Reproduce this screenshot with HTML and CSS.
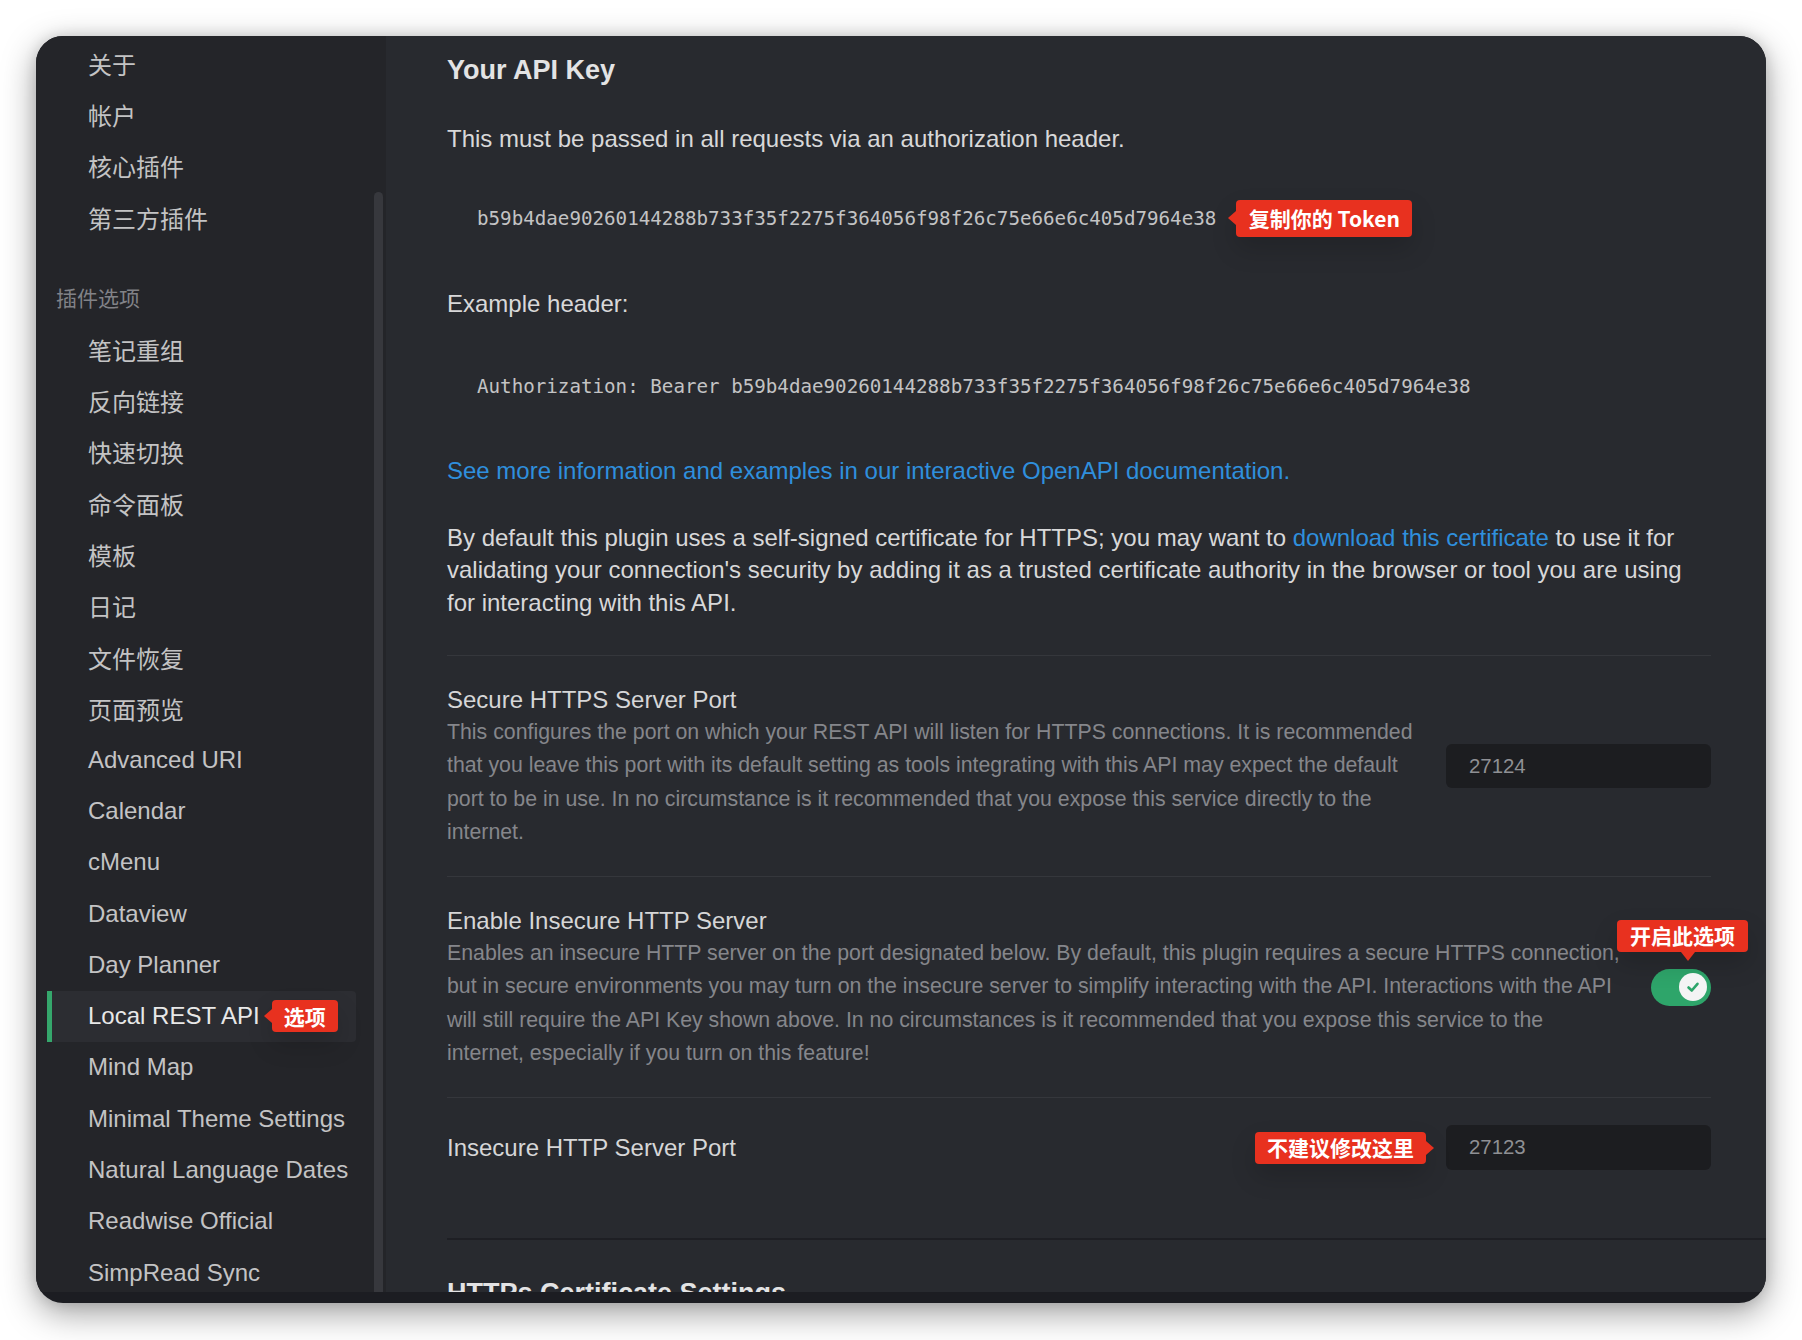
FILE: index.html
```html
<!DOCTYPE html>
<html lang="zh">
<head>
<meta charset="utf-8">
<title>Local REST API</title>
<link rel="stylesheet" href="styles.css">
</head>
<body>
<div class="window">
  <div class="frame">
    <aside class="sidebar">
      <nav class="nav">
        <div class="nav-item">关于</div>
        <div class="nav-item">帐户</div>
        <div class="nav-item">核心插件</div>
        <div class="nav-item">第三方插件</div>
        <div class="nav-heading">插件选项</div>
        <div class="nav-item">笔记重组</div>
        <div class="nav-item">反向链接</div>
        <div class="nav-item">快速切换</div>
        <div class="nav-item">命令面板</div>
        <div class="nav-item">模板</div>
        <div class="nav-item">日记</div>
        <div class="nav-item">文件恢复</div>
        <div class="nav-item">页面预览</div>
        <div class="nav-item">Advanced URI</div>
        <div class="nav-item">Calendar</div>
        <div class="nav-item">cMenu</div>
        <div class="nav-item">Dataview</div>
        <div class="nav-item">Day Planner</div>
        <div class="nav-item active"><span>Local REST API</span><span class="tag tag-left nav-tag">选项</span></div>
        <div class="nav-item">Mind Map</div>
        <div class="nav-item">Minimal Theme Settings</div>
        <div class="nav-item">Natural Language Dates</div>
        <div class="nav-item">Readwise Official</div>
        <div class="nav-item">SimpRead Sync</div>
      </nav>
      <div class="scroll-thumb"></div>
    </aside>

    <main class="content">
      <h2 class="section-title">Your API Key</h2>
      <p class="text intro">This must be passed in all requests via an authorization header.</p>
      <div class="code-row token-row">
        <code class="code">b59b4dae90260144288b733f35f2275f364056f98f26c75e66e6c405d7964e38</code>
        <span class="tag tag-left tag-tall">复制你的 Token</span>
      </div>
      <p class="text label">Example header:</p>
      <div class="code-row header-row">
        <code class="code">Authorization: Bearer b59b4dae90260144288b733f35f2275f364056f98f26c75e66e6c405d7964e38</code>
      </div>
      <p class="text link-line"><a class="link">See more information and examples in our interactive OpenAPI documentation.</a></p>
      <p class="text para">By default this plugin uses a self-signed certificate for HTTPS; you may want to <a class="link">download this certificate</a> to use it for validating your connection's security by adding it as a trusted certificate authority in the browser or tool you are using for interacting with this API.</p>

      <div class="setting first">
        <div class="setting-info">
          <div class="setting-name">Secure HTTPS Server Port</div>
          <div class="setting-desc">This configures the port on which your REST API will listen for HTTPS connections. It is recommended that you leave this port with its default setting as tools integrating with this API may expect the default port to be in use. In no circumstance is it recommended that you expose this service directly to the internet.</div>
        </div>
        <div class="setting-control">
          <div class="port">27124</div>
        </div>
      </div>

      <div class="setting">
        <div class="setting-info">
          <div class="setting-name">Enable Insecure HTTP Server</div>
          <div class="setting-desc">Enables an insecure HTTP server on the port designated below. By default, this plugin requires a secure HTTPS connection, but in secure environments you may turn on the insecure server to simplify interacting with the API. Interactions with the API will still require the API Key shown above. In no circumstances is it recommended that you expose this service to the internet, especially if you turn on this feature!</div>
        </div>
        <div class="setting-control">
          <div class="toggle">
            <span class="tag tag-down toggle-tag">开启此选项</span>
            <span class="knob">
              <svg width="16" height="16" viewBox="0 0 16 16"><polyline points="3.5,8.5 6.8,11.5 12.5,4.8" fill="none" stroke="#2ea56a" stroke-width="2.6" stroke-linecap="round" stroke-linejoin="round"/></svg>
            </span>
          </div>
        </div>
      </div>

      <div class="setting">
        <div class="setting-info">
          <div class="setting-name">Insecure HTTP Server Port</div>
        </div>
        <div class="setting-control port-control">
          <span class="tag tag-right">不建议修改这里</span>
          <div class="port tall">27123</div>
        </div>
      </div>

      <div class="setting-heading">HTTPs Certificate Settings</div>
    </main>
  </div>
</div>
</body>
</html>
```

FILE: styles.css
```css
html, body {
  margin: 0;
  padding: 0;
  background: #ffffff;
}

body {
  width: 1802px;
  height: 1340px;
  overflow: hidden;
  font-family: "Liberation Sans", Arial, "Noto Sans CJK SC", sans-serif;
}

.window {
  margin: 36px 0 0 36px;
  width: 1730px;
  height: 1267px;
  border-radius: 27px;
  overflow: hidden;
  background: #1c1d22;
  box-shadow: 0 10px 34px rgba(0, 0, 0, 0.38), 0 0 14px rgba(0, 0, 0, 0.12);
}

.frame {
  display: flex;
  height: 1256px;
  overflow: hidden;
}

/* ---------- Sidebar ---------- */
.sidebar {
  position: relative;
  width: 350px;
  flex: 0 0 350px;
  background: #242529;
  overflow: hidden;
}

.nav {
  padding-top: 1.5px;
}

.nav-item {
  display: flex;
  align-items: center;
  height: 51.3px;
  margin-left: 11px;
  width: 309px;
  padding-left: 41px;
  box-sizing: border-box;
  font-size: 24px;
  color: #c3c3c4;
  white-space: nowrap;
}

.nav-item.active {
  background: #2c2d32;
  color: #e8e8e8;
  border-radius: 0 4px 4px 0;
  box-shadow: inset 5px 0 0 #35a76c;
}

.nav-heading {
  padding: 43px 0 12px 20px;
  line-height: 26px;
  font-size: 21px;
  color: #818287;
}

.nav-tag {
  margin-left: 12px;
}

.scroll-thumb {
  position: absolute;
  left: 338px;
  top: 156px;
  bottom: 0;
  width: 9px;
  border-radius: 5px 5px 0 0;
  background: #37383d;
}

/* ---------- Content ---------- */
.content {
  flex: 1;
  background: #282a2f;
  padding: 17px 55px 0 61px;
  overflow: hidden;
  color: #d8d8d9;
}

.section-title {
  margin: 0;
  font-size: 27px;
  line-height: 34px;
  font-weight: 700;
  color: #e3e3e4;
}

.text {
  margin: 0;
  font-size: 24px;
  line-height: 33px;
}

.intro { margin-top: 34.5px; }
.label { margin-top: 52px; }
.link-line { margin-top: 51px; }

.para {
  margin-top: 35.25px;
  line-height: 32.5px;
}

.link {
  color: #2f8fdd;
  text-decoration: none;
}

.code-row {
  display: flex;
  align-items: center;
  height: 33px;
  padding-left: 30px;
}

.token-row { margin-top: 47px; }
.header-row { margin-top: 50px; }

.code {
  font-family: "DejaVu Sans Mono", "Liberation Mono", monospace;
  font-size: 19.2px;
  color: #c3c3c4;
  white-space: pre;
}

/* ---------- Annotation tags ---------- */
.tag {
  position: relative;
  display: inline-flex;
  align-items: center;
  justify-content: center;
  height: 32px;
  padding: 0 12px;
  box-sizing: border-box;
  background: #e8311f;
  color: #ffffff;
  font-family: "Noto Sans CJK SC", "Liberation Sans", sans-serif;
  font-weight: 700;
  font-size: 21px;
  line-height: 1;
  border-radius: 4px;
  white-space: nowrap;
  box-shadow: 0 12px 26px rgba(0, 0, 0, 0.16);
}

.tag-tall {
  height: 37px;
  margin-left: 20px;
  padding: 0 12.5px;
}

.tag-left::before {
  content: "";
  position: absolute;
  left: -8px;
  top: 50%;
  margin-top: -7px;
  border-top: 7px solid transparent;
  border-bottom: 7px solid transparent;
  border-right: 8px solid #e8311f;
}

.tag-right::after {
  content: "";
  position: absolute;
  right: -8px;
  top: 50%;
  margin-top: -7px;
  border-top: 7px solid transparent;
  border-bottom: 7px solid transparent;
  border-left: 8px solid #e8311f;
}

.tag-down::after {
  content: "";
  position: absolute;
  left: 64px;
  bottom: -9px;
  border-left: 7px solid transparent;
  border-right: 7px solid transparent;
  border-top: 9px solid #e8311f;
}

/* ---------- Settings ---------- */
.setting {
  display: flex;
  align-items: center;
  gap: 30px;
  padding: 27px 0;
  border-top: 1px solid #35373c;
}

.setting.first {
  margin-top: 35.75px;
}

.setting-info {
  flex: 1;
  min-width: 0;
}

.setting-name {
  font-size: 24px;
  line-height: 33px;
  color: #d6d6d7;
}

.setting-desc {
  font-size: 21.3px;
  line-height: 33.3px;
  color: #85868b;
}

.setting-control {
  flex: 0 0 auto;
  display: flex;
  align-items: center;
}

.port-control {
  gap: 20px;
}

.port {
  width: 265px;
  height: 44px;
  box-sizing: border-box;
  padding-left: 23px;
  display: flex;
  align-items: center;
  background: #1c1d20;
  border-radius: 6px;
  font-size: 20.4px;
  color: #8f9094;
}

.port.tall {
  height: 45px;
}

.toggle {
  position: relative;
  width: 60px;
  height: 37px;
  border-radius: 19px;
  background: #2ea56a;
}

.knob {
  position: absolute;
  right: 4px;
  top: 4.5px;
  width: 28px;
  height: 28px;
  border-radius: 50%;
  background: #f4f4f4;
  display: flex;
  align-items: center;
  justify-content: center;
}

.toggle-tag {
  position: absolute;
  left: -34px;
  top: -49px;
  width: 131px;
  padding: 0;
}

.setting-heading {
  margin-top: 40.5px;
  margin-right: -55px;
  padding-top: 36px;
  border-top: 2px solid #1e1f24;
  font-size: 27px;
  line-height: 34px;
  font-weight: 700;
  color: #e3e3e4;
}
```
